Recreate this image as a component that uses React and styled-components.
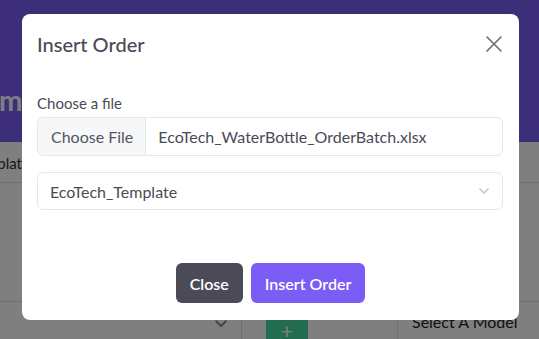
import React from 'react';
import styled, { createGlobalStyle } from 'styled-components';

const GlobalStyle = createGlobalStyle`
  html, body {
    margin: 0;
    padding: 0;
    background: #ffffff;
    font-family: 'Lato', 'Noto Sans', sans-serif;
    overflow: hidden;
  }
  * { box-sizing: border-box; }
`;

const Page = styled.div`
  width: 539px;
  height: 339px;
  position: relative;
  overflow: hidden;
  display: flex;
  flex-direction: column;
`;

const Header = styled.header`
  flex-shrink: 0;
  height: 142px;
  background: #7b5cf5;
  display: flex;
  align-items: flex-start;
  padding-top: 80px;
`;

const PageTitle = styled.h1`
  margin: 0 0 0 -80px;
  font-size: 28px;
  font-weight: 700;
  color: #ffffff;
  line-height: 40px;
  white-space: nowrap;
`;

const TableHead = styled.div`
  flex-shrink: 0;
  height: 41px;
  display: flex;
  align-items: center;
  border-bottom: 1px solid #dedede;
  font-size: 15px;
  color: #333;
`;

const HeadCell = styled.span`
  margin-left: ${(p) => p.$offset || 0}px;
  padding-top: 2px;
`;

const TableBody = styled.div`
  flex-shrink: 0;
  height: 119px;
  border-bottom: 1px solid #dedede;
`;

const ToolRow = styled.div`
  flex: 1;
  min-height: 0;
  display: flex;
  align-items: stretch;
`;

const SelectCell = styled.div`
  width: 242px;
  border-right: 1px solid #dedede;
  display: flex;
  justify-content: flex-end;
  align-items: flex-end;
  padding: 0 14px 12px 0;
  color: #888;
`;

const AddCell = styled.div`
  width: 156px;
  border-right: 1px solid #dedede;
  padding: 9px 0 0 24px;
`;

const AddButton = styled.button`
  width: 42px;
  height: 40px;
  border: none;
  border-radius: 4px;
  background: #45dba0;
  color: #fff;
  font-size: 22px;
  line-height: 1;
  padding: 0;
  font-family: inherit;
`;

const ModelCell = styled.div`
  flex: 1;
  padding: 9px 0 0 14px;
  font-size: 16px;
  line-height: 22px;
  color: #222;
  white-space: nowrap;
`;

const Backdrop = styled.div`
  position: absolute;
  inset: 0;
  background: rgba(0, 0, 0, 0.5);
`;

const Modal = styled.div`
  position: absolute;
  top: 14px;
  left: 22px;
  width: 497px;
  height: 306px;
  background: #fff;
  border-radius: 8px;
  display: flex;
  flex-direction: column;
  color: #4a4a57;
`;

const ModalHeader = styled.div`
  display: flex;
  align-items: center;
  justify-content: space-between;
  padding: 15px 16px 16px 15px;
`;

const ModalTitle = styled.h5`
  margin: 0;
  font-size: 20px;
  font-weight: 500;
  line-height: 30px;
  color: #4a4a57;
`;

const CloseX = styled.button`
  width: 18px;
  height: 18px;
  padding: 0;
  border: none;
  background: none;
  display: flex;
  color: #6b6b72;
`;

const ModalBody = styled.div`
  padding: 17px 16px 0 15px;
  display: flex;
  flex-direction: column;
`;

const Label = styled.label`
  font-size: 15px;
  line-height: 22px;
  color: #4a4a57;
  margin-bottom: 3px;
`;

const FileBox = styled.div`
  height: 39px;
  display: flex;
  align-items: stretch;
  border: 1px solid #e3e7ee;
  border-radius: 6px;
  overflow: hidden;
  font-size: 16px;
  margin-bottom: 16px;
`;

const FileButton = styled.span`
  background: #f6f7f9;
  border-right: 1px solid #e3e7ee;
  padding: 0 12px 0 13px;
  display: flex;
  align-items: center;
  color: #55555f;
`;

const FileName = styled.span`
  padding-left: 12px;
  display: flex;
  align-items: center;
  color: #4a4a57;
`;

const SelectBox = styled.div`
  height: 38px;
  display: flex;
  align-items: center;
  justify-content: space-between;
  border: 1px solid #e3e7ee;
  border-radius: 6px;
  padding: 0 13px 0 12px;
  font-size: 16px;
  color: #4a4a57;
`;

const ModalFooter = styled.div`
  margin-top: auto;
  display: flex;
  justify-content: center;
  gap: 8px;
  padding: 0 16px 17px;
`;

const Button = styled.button`
  height: 40px;
  padding: 0 14px;
  border: none;
  border-radius: 6px;
  font-family: inherit;
  font-size: 16px;
  font-weight: 600;
  color: #fff;
  background: ${(p) => (p.$primary ? '#7b5cf5' : '#4b4a57')};
`;

const Chevron = ({ color = '#c3c6cd', size = 10 }) => (
  <svg width={size} height={size * 0.6} viewBox="0 0 10 6" fill="none">
    <path d="M1 1l4 4 4-4" stroke={color} strokeWidth="1.6" strokeLinecap="round" strokeLinejoin="round" />
  </svg>
);

export default function App() {
  return (
    <>
      <GlobalStyle />
      <Page>
        <Header>
          <PageTitle>Welcome</PageTitle>
        </Header>
        <TableHead>
          <HeadCell $offset={-30}>Template</HeadCell>
        </TableHead>
        <TableBody />
        <ToolRow>
          <SelectCell>
            <Chevron color="#888" size={12} />
          </SelectCell>
          <AddCell>
            <AddButton>+</AddButton>
          </AddCell>
          <ModelCell>Select A Model</ModelCell>
        </ToolRow>

        <Backdrop />
        <Modal>
          <ModalHeader>
            <ModalTitle>Insert Order</ModalTitle>
            <CloseX aria-label="Close">
              <svg width="18" height="18" viewBox="0 0 18 18">
                <path d="M2 2l14 14M16 2L2 16" stroke="currentColor" strokeWidth="1.6" strokeLinecap="round" />
              </svg>
            </CloseX>
          </ModalHeader>
          <ModalBody>
            <Label>Choose a file</Label>
            <FileBox>
              <FileButton>Choose File</FileButton>
              <FileName>EcoTech_WaterBottle_OrderBatch.xlsx</FileName>
            </FileBox>
            <SelectBox>
              <span>EcoTech_Template</span>
              <Chevron />
            </SelectBox>
          </ModalBody>
          <ModalFooter>
            <Button>Close</Button>
            <Button $primary>Insert Order</Button>
          </ModalFooter>
        </Modal>
      </Page>
    </>
  );
}
